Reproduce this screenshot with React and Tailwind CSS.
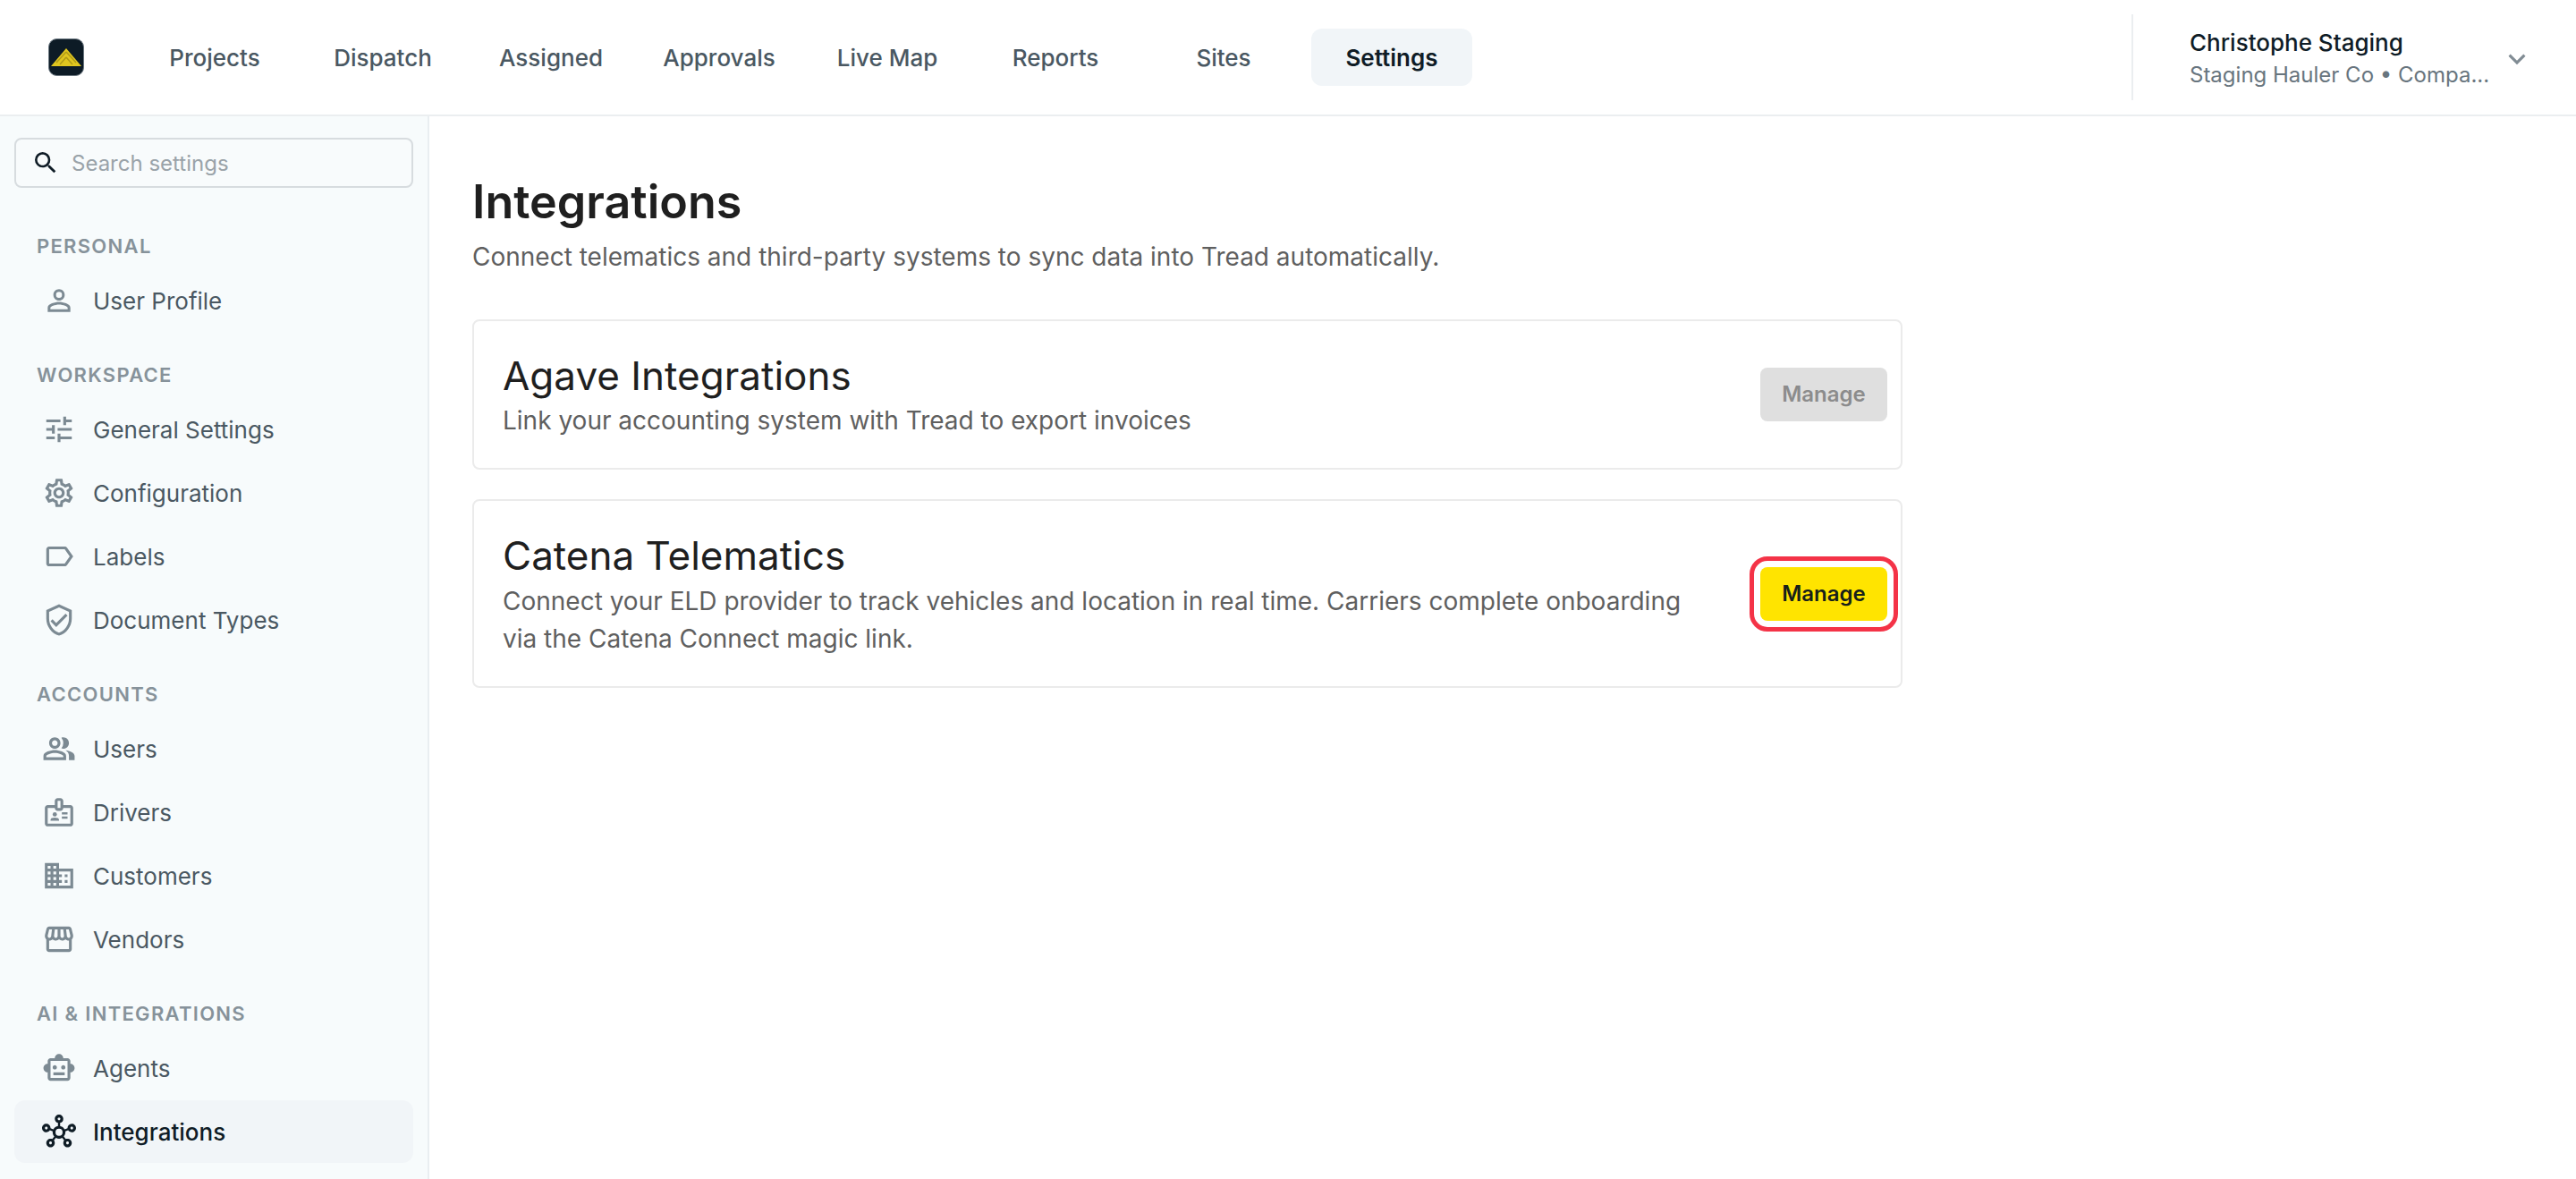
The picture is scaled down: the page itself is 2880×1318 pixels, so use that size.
import React from "react";
import {
  MdSearch, MdOutlinePersonOutline, MdOutlineTune, MdOutlineSettings, MdOutlineLabel, MdOutlineVerifiedUser,
  MdOutlinePeopleAlt, MdOutlineBadge, MdDomain, MdOutlineStorefront, MdOutlineSmartToy, MdOutlineHub, MdKeyboardArrowDown,
} from "react-icons/md";

const NAV = ["Projects", "Dispatch", "Assigned", "Approvals", "Live Map", "Reports", "Sites", "Settings"];
const SECTIONS = [
  { title: "PERSONAL", items: [["User Profile", MdOutlinePersonOutline]] },
  { title: "WORKSPACE", items: [["General Settings", MdOutlineTune], ["Configuration", MdOutlineSettings], ["Labels", MdOutlineLabel], ["Document Types", MdOutlineVerifiedUser]] },
  { title: "ACCOUNTS", items: [["Users", MdOutlinePeopleAlt], ["Drivers", MdOutlineBadge], ["Customers", MdDomain], ["Vendors", MdOutlineStorefront]] },
  { title: "AI & INTEGRATIONS", items: [["Agents", MdOutlineSmartToy], ["Integrations", MdOutlineHub]] },
];

function Logo() {
  return (
    <svg width="40" height="42" viewBox="0 0 40 42" className="shrink-0">
      <rect x="0.5" y="0.5" width="39" height="41" rx="9" fill="#0d1b26" stroke="#6b7780" strokeWidth="1" />
      <polygon points="20,11 37,31 3,31" fill="#e0c61f" />
      <path d="M20 15 L31 27 M20 15 L9 27 M20 21 L27 29 M20 21 L13 29" stroke="#b09a18" strokeWidth="1.5" fill="none" />
    </svg>
  );
}

export default function App() {
  return (
    <div className="h-screen w-full overflow-hidden bg-white flex flex-col font-['Inter',sans-serif]">
      <header className="h-[130px] shrink-0 border-b-2 border-[#ebeef0] flex items-center">
        <div className="w-[150px] pl-[54px] shrink-0 flex"><Logo /></div>
        <nav className="flex gap-2">
          {NAV.map((n) => (
            <div key={n} className={`w-[180px] h-[64px] flex items-center justify-center rounded-[12px] text-[26px] ${n === "Settings" ? "bg-[#f1f5f8] text-[#0f1c26] font-semibold" : "text-[#4a5862] font-medium"}`}>{n}</div>
          ))}
        </nav>
        <div className="ml-auto h-[96px] border-l-2 border-[#ebeef0] pl-[63px] flex items-center w-[497px] shrink-0">
          <div className="w-[346px] pt-[3px]">
            <div className="text-[26px] leading-[36px] font-medium text-[#0f1c26]">Christophe Staging</div>
            <div className="text-[24px] leading-[36px] text-[#68757e] whitespace-nowrap">Staging Hauler Co • Compa...</div>
          </div>
          <MdKeyboardArrowDown className="ml-[1px] mt-[3px] text-[#818c94]" size={38} />
        </div>
      </header>
      <div className="flex flex-1 min-h-0">
        <aside className="w-[480px] shrink-0 border-r-2 border-[#e9eef1] bg-[#f7fbfc] px-4 pt-6">
          <div className="h-[56px] w-[446px] rounded-[8px] border-2 border-[#d7dcdf] bg-[#f8fbfc] flex items-center pl-[17px] mb-[52px]">
            <MdSearch size={32} className="text-[#0f1c26] shrink-0" />
            <span className="ml-[13px] text-[24px] text-[#9aa3a9] pt-[1px]">Search settings</span>
          </div>
          {SECTIONS.map((s) => (
            <section key={s.title} className="mt-[35px] first:mt-0">
              <div className="h-[26px] mb-[13px] pl-[25px] flex items-center text-[22px] font-semibold tracking-[1.3px] text-[#86929a]">{s.title}</div>
              {s.items.map(([label, Icon]) => {
                const active = label === "Integrations";
                return (
                  <div key={label} className={`h-[70px] mb-px rounded-[12px] flex items-center text-[26px] ${active ? "bg-[#f1f5f8] text-[#0f1c26] font-medium" : "text-[#4a5862]"}`}>
                    <div className="w-[100px] flex justify-center shrink-0 -mr-[12px]">
                      <Icon size={38} className={active ? "text-[#0f1c26]" : "text-[#7c8a93]"} />
                    </div>
                    <span>{label}</span>
                  </div>
                );
              })}
            </section>
          ))}
        </aside>
        <main className="flex-1 pl-[48px] pt-[62px]">
          <h1 className="text-[52px] leading-[68px] font-semibold text-[#1f1f1f]">Integrations</h1>
          <p className="mt-[7px] text-[28px] leading-[40px] text-[#5f5f5f]">Connect telematics and third-party systems to sync data into Tread automatically.</p>
          <div className="w-[1599px] mt-[50px] flex flex-col gap-[33px]">
            <div className="h-[168px] rounded-[8px] border-2 border-[#ebebeb] flex items-center justify-between pl-[32px] pr-[15px]">
              <div className="pt-[2px]">
                <div className="text-[44px] leading-[52px] text-[#1f1f1f]">Agave Integrations</div>
                <div className="mt-[4px] text-[28px] leading-[40px] text-[#5f5f5f]">Link your accounting system with Tread to export invoices</div>
              </div>
              <button className="w-[142px] h-[60px] rounded-[8px] bg-[#dfdfdf] text-[#8c8c8c] text-[24px] font-semibold">Manage</button>
            </div>
            <div className="h-[211px] rounded-[8px] border-2 border-[#ebebeb] flex items-center justify-between pl-[32px] pr-[15px]">
              <div className="w-[1330px] pt-[3px]">
                <div className="text-[44px] leading-[52px] text-[#1f1f1f]">Catena Telematics</div>
                <div className="mt-[4px] text-[28px] leading-[42px] text-[#5f5f5f]">Connect your ELD provider to track vehicles and location in real time. Carriers complete onboarding via the Catena Connect magic link.</div>
              </div>
              <button className="w-[142px] h-[60px] rounded-[8px] bg-[#ffe400] text-[#17201a] text-[24px] font-semibold outline-[5px] outline-offset-[7px] outline-[#f43347]">Manage</button>
            </div>
          </div>
        </main>
      </div>
    </div>
  );
}
